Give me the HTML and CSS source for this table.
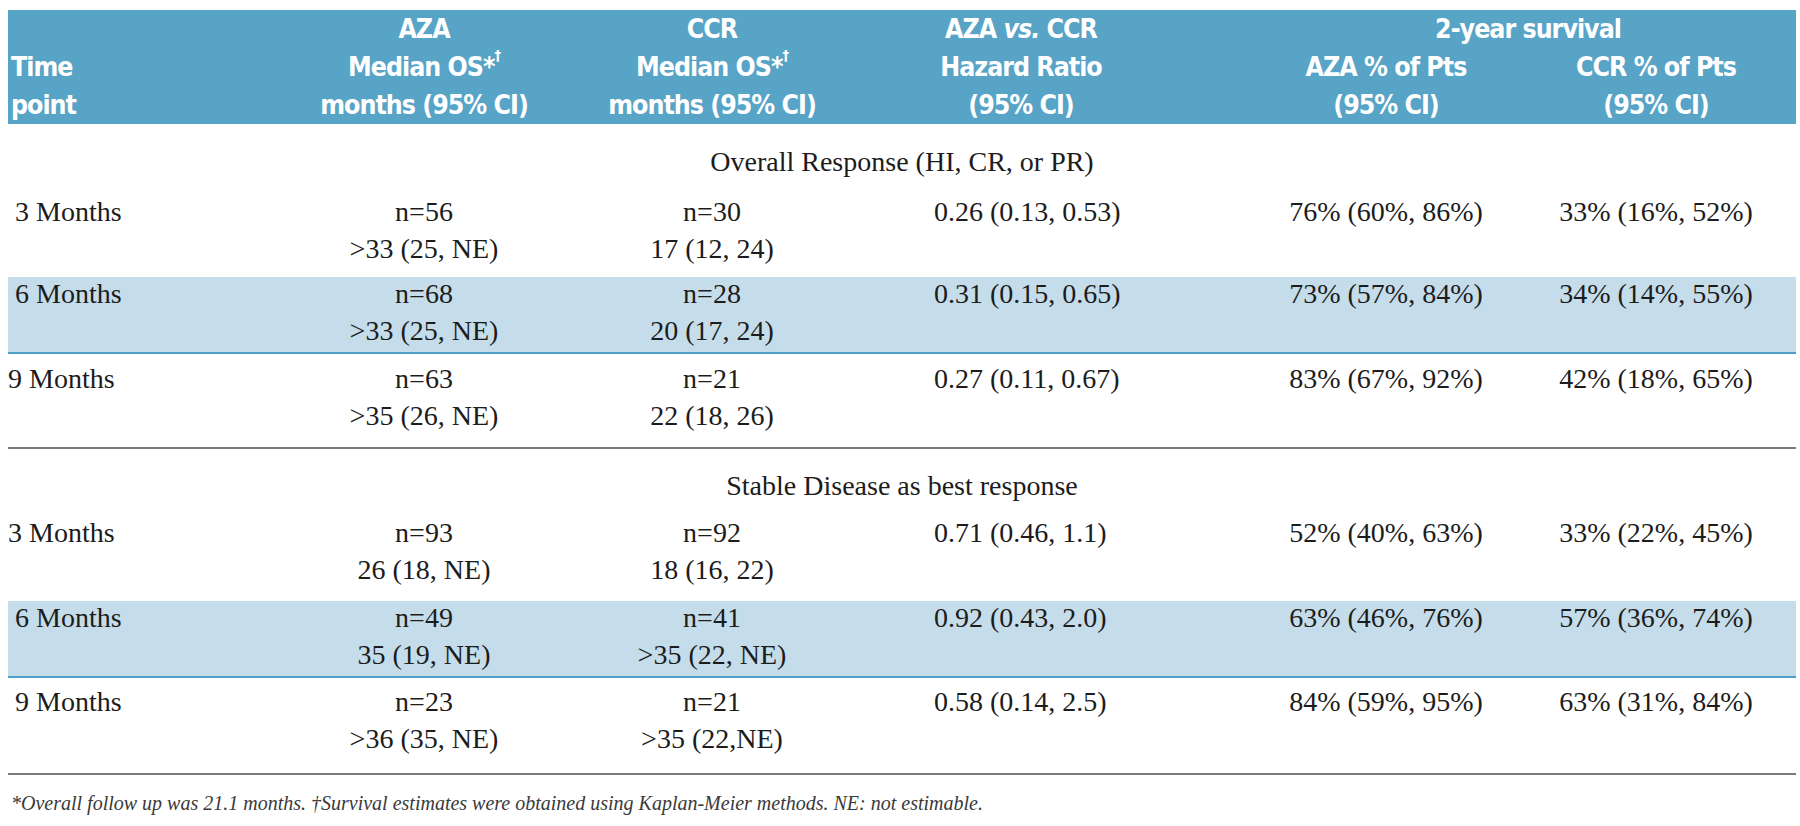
FILE: index.html
```html
<!DOCTYPE html>
<html lang="en">
<head>
<meta charset="utf-8">
<title>Survival by response</title>
<link rel="stylesheet" href="styles.css">
</head>
<body>
<div class="page">
  <table class="results">
    <colgroup>
      <col class="c1"><col class="c2"><col class="c3"><col class="c4"><col class="c5"><col class="c6">
    </colgroup>
    <thead>
      <tr class="hrow1">
        <th rowspan="2" class="th-time">Time<br>point</th>
        <th rowspan="2">AZA<br>Median OS*<span class="dag">†</span><br>months (95% CI)</th>
        <th rowspan="2">CCR<br>Median OS*<span class="dag">†</span><br>months (95% CI)</th>
        <th rowspan="2">AZA <i>vs.</i> CCR<br>Hazard Ratio<br>(95% CI)</th>
        <th colspan="2" class="th-surv">2-year survival</th>
      </tr>
      <tr class="hrow2">
        <th class="th-azap">AZA % of Pts<br>(95% CI)</th>
        <th class="th-ccrp">CCR % of Pts<br>(95% CI)</th>
      </tr>
    </thead>
    <tbody>
      <tr class="title1">
        <td colspan="6" class="sec-title">Overall Response (HI, CR, or PR)</td>
      </tr>
      <tr class="s1r3">
        <td class="tp ind">3 Months</td>
        <td><div class="ln">n=56</div><div class="ln">&gt;33 (25, NE)</div></td>
        <td><div class="ln">n=30</div><div class="ln">17 (12, 24)</div></td>
        <td class="hr">0.26 (0.13, 0.53)</td>
        <td class="azap">76% (60%, 86%)</td>
        <td class="ccrp">33% (16%, 52%)</td>
      </tr>
      <tr class="s1r6 hl">
        <td class="tp ind">6 Months</td>
        <td><div class="ln">n=68</div><div class="ln">&gt;33 (25, NE)</div></td>
        <td><div class="ln">n=28</div><div class="ln">20 (17, 24)</div></td>
        <td class="hr">0.31 (0.15, 0.65)</td>
        <td class="azap">73% (57%, 84%)</td>
        <td class="ccrp">34% (14%, 55%)</td>
      </tr>
      <tr class="s1r9 endsec">
        <td class="tp">9 Months</td>
        <td><div class="ln">n=63</div><div class="ln">&gt;35 (26, NE)</div></td>
        <td><div class="ln">n=21</div><div class="ln">22 (18, 26)</div></td>
        <td class="hr">0.27 (0.11, 0.67)</td>
        <td class="azap">83% (67%, 92%)</td>
        <td class="ccrp">42% (18%, 65%)</td>
      </tr>
      <tr class="title2">
        <td colspan="6" class="sec-title">Stable Disease as best response</td>
      </tr>
      <tr class="s2r3">
        <td class="tp">3 Months</td>
        <td><div class="ln">n=93</div><div class="ln">26 (18, NE)</div></td>
        <td><div class="ln">n=92</div><div class="ln">18 (16, 22)</div></td>
        <td class="hr">0.71 (0.46, 1.1)</td>
        <td class="azap">52% (40%, 63%)</td>
        <td class="ccrp">33% (22%, 45%)</td>
      </tr>
      <tr class="s2r6 hl">
        <td class="tp ind">6 Months</td>
        <td><div class="ln">n=49</div><div class="ln">35 (19, NE)</div></td>
        <td><div class="ln">n=41</div><div class="ln">&gt;35 (22, NE)</div></td>
        <td class="hr">0.92 (0.43, 2.0)</td>
        <td class="azap">63% (46%, 76%)</td>
        <td class="ccrp">57% (36%, 74%)</td>
      </tr>
      <tr class="s2r9 endsec">
        <td class="tp ind">9 Months</td>
        <td><div class="ln">n=23</div><div class="ln">&gt;36 (35, NE)</div></td>
        <td><div class="ln">n=21</div><div class="ln">&gt;35 (22,NE)</div></td>
        <td class="hr">0.58 (0.14, 2.5)</td>
        <td class="azap">84% (59%, 95%)</td>
        <td class="ccrp">63% (31%, 84%)</td>
      </tr>
    </tbody>
  </table>
  <p class="note">*Overall follow up was 21.1 months. †Survival estimates were obtained using Kaplan-Meier methods. NE: not estimable.</p>
</div>
</body>
</html>
```

FILE: styles.css
```css
html, body {
  margin: 0;
  padding: 0;
  background: #ffffff;
}

body {
  width: 1800px;
  height: 826px;
  overflow: hidden;
}

.page {
  padding: 10px 4px 0 8px;
}

.results {
  width: 1788px;
  table-layout: fixed;
  border-collapse: separate;
  border-spacing: 0;
  font-family: "Liberation Serif", "Times New Roman", serif;
  font-size: 28px;
  color: #1c1c1c;
}

col.c1 { width: 274px; }
col.c2 { width: 284px; }
col.c3 { width: 292px; }
col.c4 { width: 326px; }
col.c5 { width: 336px; }
col.c6 { width: 276px; }

thead th {
  background: #58a4c7;
  color: #ffffff;
  font-family: "DejaVu Sans Condensed", "Liberation Sans", sans-serif;
  font-weight: bold;
  font-size: 26.5px;
  letter-spacing: -1px;
  line-height: 38px;
  padding: 0;
  text-align: center;
  vertical-align: top;
  white-space: nowrap;
}

thead th i {
  font-style: italic;
}

.dag {
  font-size: 0.55em;
  vertical-align: top;
  line-height: 0;
  position: relative;
  top: 0.5em;
}

.th-time {
  text-align: left;
  vertical-align: bottom;
  padding-left: 3px;
}

.th-surv {
  padding-left: 76px;
}

.th-azap {
  padding-left: 68px;
}

.th-ccrp {
  padding-right: 4px;
}

tbody td {
  padding: 0;
  line-height: 33px;
  text-align: center;
  vertical-align: top;
  white-space: nowrap;
}

.ln + .ln {
  margin-top: 4px;
}

td.tp {
  text-align: left;
  padding-left: 0;
}

td.tp.ind {
  padding-left: 7px;
}

td.hr {
  text-align: left;
  padding-left: 76px;
}

td.azap {
  padding-left: 68px;
}

td.ccrp {
  padding-right: 4px;
}

.hl td {
  background: #c5ddea;
  border-bottom: 2px solid #4f9fcb;
}

.endsec td {
  border-bottom: 2px solid #7a7a7a;
}

.title1 td { padding-top: 21px; padding-bottom: 17px; }
.s1r3 td { padding-top: 0; padding-bottom: 12px; }
.s1r6 td { padding-top: 0; padding-bottom: 5px; }
.s1r9 td { padding-top: 8px; padding-bottom: 15px; }
.title2 td { padding-top: 20px; padding-bottom: 14px; }
.s2r3 td { padding-top: 0; padding-bottom: 15px; }
.s2r6 td { padding-top: 0; padding-bottom: 5px; }
.s2r9 td { padding-top: 7px; padding-bottom: 18px; }

td.sec-title {
  text-align: center;
}

.note {
  margin: 15px 0 0 0;
  padding-left: 3px;
  font-family: "Liberation Serif", "Times New Roman", serif;
  font-style: italic;
  font-size: 20px;
  line-height: 26px;
  color: #3a3a3a;
  white-space: nowrap;
}
```
